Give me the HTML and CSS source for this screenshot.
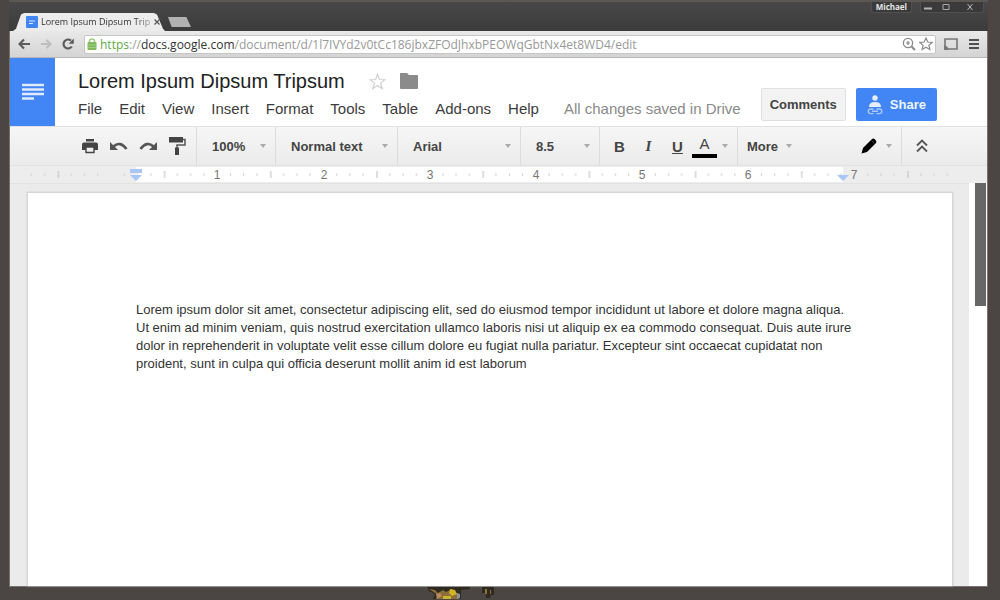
FILE: index.html
```html
<!DOCTYPE html>
<html lang="en">
<head>
<meta charset="utf-8">
<title>Lorem Ipsum Dipsum Tripsum</title>
<link rel="stylesheet" href="styles.css">
</head>
<body>
<div class="desktop">
  <div class="window">
    <div class="tabstrip">
      <div class="tab">
        <svg class="favicon" viewBox="0 0 12 12"><rect width="12" height="12" rx="1" fill="#4285f4"/><path d="M3 5h6M3 7.500h4" stroke="#dce8fd" stroke-width="1.200"/></svg>
        <span class="tab-title">Lorem Ipsum Dipsum Trip</span>
        <button class="tab-close" aria-label="Close tab"><svg viewBox="0 0 6 6"><path d="M.5.5l5 5M5.500.5l-5 5" stroke="#555" stroke-width="1.200"/></svg></button>
      </div>
      <button class="new-tab" aria-label="New tab"></button>
      <div class="window-controls">
        <button class="profile">Michael</button>
        <div class="controls">
          <button aria-label="Minimize"><svg viewBox="0 0 8 8"><path d="M0 5.500h8" stroke="#b5b5b5" stroke-width="2"/></svg></button>
          <button aria-label="Maximize"><svg viewBox="0 0 8 8"><path d="M1 1.500h6v5H1z" fill="none" stroke="#aaa"/></svg></button>
          <button aria-label="Close window"><svg viewBox="0 0 8 8"><path d="M1.500 1l5 6M6.500 1l-5 6" stroke="#bbb"/></svg></button>
        </div>
      </div>
    </div>

    <div class="navbar">
      <button class="nav-btn" aria-label="Back"><svg viewBox="0 0 12 12"><path d="M12 6H2M6 1.500L1.500 6 6 10.500" fill="none" stroke="#5c5c5c" stroke-width="2.200"/></svg></button>
      <button class="nav-btn" aria-label="Forward"><svg viewBox="0 0 12 12"><path d="M1 6h9M6.500 2l4 4-4 4" fill="none" stroke="#bdbdbd" stroke-width="2"/></svg></button>
      <button class="nav-btn" aria-label="Reload"><svg viewBox="0 0 12 12"><path d="M9.800 8.500A4.500 4.500 0 1 1 9 2.600" fill="none" stroke="#5c5c5c" stroke-width="2.200"/><path d="M11.800.5v5.200H6.600z" fill="#5c5c5c"/></svg></button>
      <div class="omnibox">
        <svg class="lock" viewBox="0 0 10 12"><path d="M2.500 5V3a2.500 2 0 0 1 5 0v2" fill="none" stroke="#9ccb82" stroke-width="1.500"/><rect x=".5" y="4" width="9" height="8" rx="1" fill="#7dbb5c"/><path d="M1 7h8M1 9.500h8" stroke="#a7d38f" stroke-width=".8"/></svg>
        <div class="url" role="textbox" aria-label="Address" contenteditable="true" spellcheck="false"><span class="url-secure">https</span>://<span class="url-host">docs.google.com</span>/document/d/1l7IVYd2v0tCc186jbxZFOdJhxbPEOWqGbtNx4et8WD4/edit</div>
        <button aria-label="Zoom"><svg class="omni-icon" viewBox="0 0 14 14"><circle cx="6" cy="6" r="4.600" fill="none" stroke="#888" stroke-width="1.300"/><path d="M9.500 9.500l3.500 3.500" stroke="#888" stroke-width="2"/><path d="M4 6h4M6 4v4" stroke="#888" stroke-width="1.200"/></svg></button>
        <button aria-label="Bookmark this page"><svg class="omni-icon" viewBox="0 0 14 14"><path d="M7 1l1.800 4 4.400.4-3.300 2.900 1 4.300L7 10.300l-3.900 2.300 1-4.300L.8 5.400 5.200 5z" fill="none" stroke="#8c8c8c" stroke-width="1.200"/></svg></button>
      </div>
      <button class="cast" aria-label="Cast"><svg viewBox="0 0 14 12"><path d="M1 10.500V1h12v10H1" fill="none" stroke="#777" stroke-width="1.600"/><path d="M0 7.500A4.500 4.500 0 0 1 4.500 12H0z" fill="#777"/></svg></button>
      <button class="chrome-menu" aria-label="Chrome menu"><svg viewBox="0 0 10 12"><path d="M0 2h10M0 6h10M0 10h10" stroke="#505050" stroke-width="2.200"/></svg></button>
    </div>

    <header class="doc-header">
      <a class="docs-home" href="#" aria-label="Docs home"><svg viewBox="0 0 24 20"><path d="M1 3h22M1 7.500h22M1 12h22M1 16.500h12" stroke="#dfeafd" stroke-width="2.300"/></svg></a>
      <div class="doc-info">
        <div class="title-row">
          <h1>Lorem Ipsum Dipsum Tripsum</h1>
          <button aria-label="Star"><svg class="star" viewBox="0 0 16 16"><path d="M8 1.200l1.800 4.900 5.200.2-4.100 3.200 1.500 5.100L8 11.700l-4.400 2.900 1.500-5.100L1 6.300l5.200-.2z" fill="none" stroke="#cfcfcf" stroke-width="1.100"/></svg></button>
          <button aria-label="Move to folder"><svg class="folder" viewBox="0 0 20 16"><path d="M1 0h7l2 2h8q1 0 1 1v12q0 1-1 1H2q-1 0-1-1z" fill="#8b8b8b"/></svg></button>
        </div>
        <nav class="menus">
          <button>File</button><button>Edit</button><button>View</button><button>Insert</button><button>Format</button><button>Tools</button><button>Table</button><button>Add-ons</button><button>Help</button>
          <span class="save-state">All changes saved in Drive</span>
        </nav>
      </div>
      <div class="doc-actions">
        <button class="comments">Comments</button>
        <button class="share"><svg viewBox="0 0 16 20"><circle cx="8" cy="3" r="2.700" fill="#e3edfe"/><path d="M2 12q0-5 6-5t6 5z" fill="#e3edfe"/><path d="M6.500 14H3.500a2.300 2.300 0 0 0 0 4.600h3M9.500 14h3a2.300 2.300 0 0 1 0 4.600h-3M5 16.300h6" fill="none" stroke="#a9c7fb" stroke-width="1.400"/></svg>Share</button>
      </div>
    </header>

    <div class="toolbar" role="toolbar" aria-label="Formatting">
      <div class="group history">
        <button aria-label="Print"><svg viewBox="0 0 18 18"><path d="M5 2h8v2.500H5z" fill="#444"/><path d="M3 5.500h12q2 0 2 2V13H1V7.500q0-2 2-2z" fill="#444"/><path d="M5 10h8v5.500H5z" fill="#f0f0f0" stroke="#444" stroke-width="1.400"/></svg></button>
        <button aria-label="Undo"><svg viewBox="0 0 18 18"><path d="M0 5v8h8z" fill="#555"/><path d="M3.500 9.500Q10 3.500 16.500 12" fill="none" stroke="#555" stroke-width="2.600"/></svg></button>
        <button aria-label="Redo"><svg viewBox="0 0 18 18"><path d="M18 5v8h-8z" fill="#555"/><path d="M14.500 9.500Q8 3.500 1.500 12" fill="none" stroke="#555" stroke-width="2.600"/></svg></button>
        <button aria-label="Paint format"><svg viewBox="0 0 18 18"><path d="M1 0h14v5.500H1z" fill="#444"/><path d="M15 2.500h2V8H9v3" fill="none" stroke="#555" stroke-width="1.500"/><path d="M7 10.500h4V18H7z" fill="#444"/></svg></button>
      </div>
      <div class="group pick zoom"><select aria-label="Zoom"><option>100%</option></select></div>
      <div class="group pick style"><select aria-label="Style"><option>Normal text</option></select></div>
      <div class="group pick font"><select aria-label="Font"><option>Arial</option></select></div>
      <div class="group pick size"><select aria-label="Font size"><option>8.5</option></select></div>
      <div class="group format">
        <button class="bold" aria-label="Bold">B</button>
        <button class="italic" aria-label="Italic">I</button>
        <button class="underline" aria-label="Underline">U</button>
        <button class="color arrow" aria-label="Text color"><span>A</span></button>
      </div>
      <div class="group more"><button class="arrow">More</button></div>
      <div class="group mode"><button class="arrow" aria-label="Editing mode"><svg viewBox="0 0 18 18"><path d="M1.500 16.500l1.500-5.500L12 2q1.500-1 3 .5l.5.5q1.500 1.500.5 3L7 15z" fill="#000"/><path d="M11.500 3.500l3 3" stroke="#555" stroke-width=".8"/></svg></button></div>
      <div class="group hide"><button aria-label="Hide the menus"><svg viewBox="0 0 12 14"><path d="M1 6.500l5-5 5 5M1 12.500l5-5 5 5" fill="none" stroke="#555" stroke-width="1.800"/></svg></button></div>
    </div>

    <div class="ruler">
      <svg width="977" height="17" viewBox="10 166 977 17">
        <defs>
          <pattern id="inch" x="111" y="166" width="106.200" height="17" patternUnits="userSpaceOnUse">
            <path d="M13.300 7v3M26.500 7v3M39.800 7v3M66.400 7v3M79.700 7v3M92.900 7v3" stroke="#d3d3d3"/>
            <path d="M53.600 5v7" stroke="#bdbdbd"/>
          </pattern>
        </defs>
        <path d="M136 167h707v15H136z" fill="#fff"/>
        <path d="M30 166h920v17H30z" fill="url(#inch)"/>
        <g class="ruler-numbers"><text x="217" y="179">1</text><text x="324" y="179">2</text><text x="430" y="179">3</text><text x="536" y="179">4</text><text x="642" y="179">5</text><text x="748" y="179">6</text><text x="854" y="179">7</text></g>
        <path d="M130 169h12v4h-12zM130 175h12l-6 6zM837 175h12l-6 6z" fill="#a9c6f5"/>
      </svg>
    </div>

    <div class="workspace">
      <div class="canvas">
        <main class="page">
          <p>Lorem ipsum dolor sit amet, consectetur adipiscing elit, sed do eiusmod tempor incididunt ut labore et dolore magna aliqua. Ut enim ad minim veniam, quis nostrud exercitation ullamco laboris nisi ut aliquip ex ea commodo consequat. Duis aute irure dolor in reprehenderit in voluptate velit esse cillum dolore eu fugiat nulla pariatur. Excepteur sint occaecat cupidatat non proident, sunt in culpa qui officia deserunt mollit anim id est laborum</p>
        </main>
      </div>
      <div class="scrollbar"><div class="thumb"></div></div>
    </div>
  </div>
  <div class="wallpaper">
    <svg width="70" height="12" viewBox="426 588 70 12">
      <path d="M427 588h43v2l-9 1v9h-28l2-5-6-3z" fill="#2e2a20"/>
      <path d="M429 590l6 1 3 3 5-3 3 2 6-3 2 3 4 2 1 5h-23l2-4z" fill="#8a6f38"/>
      <path d="M450 590l5 1 2 4-5 2-3-3zM443 597h8v3h-8z" fill="#d0b42a"/>
      <path d="M436 595l4-1 2 3-5 3z" fill="#b98a62"/>
      <path d="M457 594l3 1v4l-3 1z" fill="#8b929d"/>
      <path d="M482 588h12v8h-3l-1 3h-4v-5h-4z" fill="#2e2a22"/>
      <path d="M485 590h2v5h-2zM490 591h1v4h-1z" fill="#8a7531"/>
    </svg>
  </div>
</div>
</body>
</html>
```
FILE: styles.css
```css
* { box-sizing: border-box; }

body {
  margin: 0;
  font-family: "Liberation Sans", Arial, sans-serif;
  color: #333;
}

button {
  margin: 0;
  padding: 0;
  border: 0;
  background: none;
  color: inherit;
  font: inherit;
}

svg { display: block; }

h1, p { margin: 0; }

.desktop {
  display: flex;
  flex-direction: column;
  min-height: 100vh;
  padding: 0 12px 0 9px;
  background: #4b4543;
}

.window {
  display: flex;
  flex: 1;
  flex-direction: column;
  border: solid #777270;
  border-width: 0 1px 1px;
}

/* Tab strip */
.tabstrip {
  display: flex;
  align-items: flex-end;
  height: 31px;
  margin: 0 -1px;
  padding-left: 4px;
  border-top: 2px solid #5a5755;
  background: linear-gradient(#484848, #3b3b3b);
}

.tab {
  display: flex;
  align-items: center;
  width: 152px;
  height: 18px;
  padding: 0 8px 0 13px;
  background: #ececec;
  clip-path: polygon(0 100%, 3px 88%, 8px 8%, 11px 0, 141px 0, 144px 8%, 150px 88%, 100% 100%);
}

.favicon { flex: none; width: 12px; height: 12px; }

.tab-title {
  flex: 1;
  margin-left: 3px;
  font: 9px/14px "Open Sans", sans-serif;
  white-space: nowrap;
  mask-image: linear-gradient(90deg, #000 85%, #0006);
}

.tab-close { margin: 0 4px 0 4px; }
.tab-close svg { width: 6px; height: 6px; }

.new-tab {
  width: 23px;
  height: 10px;
  margin: 0 0 4px 3px;
  background: #b1b1b1;
  clip-path: polygon(0 0, 80% 0, 100% 100%, 16% 100%);
}

.window-controls {
  display: flex;
  align-self: flex-start;
  gap: 8px;
  margin-left: auto;
  padding-right: 4px;
}

.profile, .controls {
  height: 11px;
  border: 1px solid #505050;
  border-top: 0;
  border-radius: 0 0 3px 3px;
  background: #3a3a3a;
}

.profile {
  padding: 0 4px;
  color: #e6e6e6;
  font: bold 8px/10px "Open Sans", sans-serif;
}

.controls {
  display: grid;
  grid-template-columns: 14px 22px 26px;
  place-items: center;
}

.controls svg { width: 8px; height: 8px; }

/* Address bar */
.navbar {
  display: flex;
  align-items: center;
  height: 27px;
  padding: 0 8px 0 8px;
  border-bottom: 1px solid #b6b6b6;
  background: linear-gradient(#e9e9e9, #d4d4d4);
}

.nav-btn { width: 12px; margin-right: 10px; }
.nav-btn svg { width: 12px; height: 12px; }

.omnibox {
  display: flex;
  flex: 1;
  align-items: center;
  gap: 3px;
  height: 19px;
  padding: 0 2px;
  border: 1px solid #c6c6c6;
  border-radius: 2px;
  background: #fff;
}

.lock { width: 10px; height: 12px; }

.url {
  flex: 1;
  overflow: hidden;
  color: #999;
  font: 12px/17px "Open Sans", sans-serif;
  white-space: nowrap;
}

.url-secure { color: #60aa45; }
.url-host { color: #333; }
.omni-icon { width: 14px; height: 14px; }

.cast { margin: 0 11px 0 8px; }
.cast svg { width: 14px; height: 12px; }
.chrome-menu svg { width: 10px; height: 12px; }

/* Document header */
.doc-header {
  display: flex;
  min-height: 68px;
  background: #fff;
}

.docs-home {
  display: grid;
  place-items: center;
  width: 45px;
  background: #4285f4;
}

.docs-home svg { width: 24px; height: 20px; }

.doc-info { flex: 1; padding: 11px 0 0 23px; }

.title-row { display: flex; align-items: center; }

h1 {
  color: #222;
  font-size: 20px;
  font-weight: normal;
  line-height: 24px;
  white-space: nowrap;
}

.star { width: 17px; height: 17px; margin: 0 13px 0 24px; }
.folder { width: 20px; height: 16px; }

.menus {
  display: flex;
  gap: 17px;
  margin-top: 6px;
  color: #3c3c3c;
  font-size: 15px;
  line-height: 20px;
  white-space: nowrap;
}

.save-state { margin-left: 8px; color: #8a8a8a; }

.doc-actions {
  display: flex;
  align-items: flex-end;
  gap: 10px;
  padding: 0 50px 5px 0;
  font-size: 13px;
  font-weight: bold;
}

.comments, .share { height: 33px; border-radius: 2px; }

.comments {
  padding: 0 8px;
  border: 1px solid #e0e0e0;
  background: #f3f3f3;
  color: #444;
}

.share {
  display: flex;
  align-items: center;
  gap: 7px;
  padding: 0 11px;
  background: #4285f4;
  color: #eef4ff;
}

.share svg { width: 16px; height: 20px; }

/* Formatting toolbar */
.toolbar {
  display: flex;
  height: 40px;
  border: solid #e2e2e2;
  border-width: 1px 0;
  background: linear-gradient(#f6f6f6, #ebebeb);
  color: #444;
  font-size: 13px;
  font-weight: bold;
}

.group {
  display: flex;
  align-items: center;
  border-right: 1px solid #dcdcdc;
}

.history { padding: 0 5px 0 65px; }
.history button { display: grid; place-items: center; width: 29px; height: 30px; }
.history svg { width: 18px; height: 18px; }

.pick { position: relative; }

.pick select {
  width: 100%;
  height: 30px;
  padding: 0 0 0 15px;
  border: 0;
  background: none;
  color: inherit;
  font: inherit;
  appearance: none;
}

.pick::after, .arrow::after {
  border: solid transparent;
  border-width: 4px 3px 0;
  border-top-color: #aaa;
  content: "";
}

.pick::after { position: absolute; right: 9px; }

.zoom { width: 79px; }
.style { width: 122px; }
.font { width: 123px; }
.size { width: 79px; }

.arrow { display: flex; align-items: center; }

.format { padding: 0 5px; font-size: 15px; }
.format button { width: 29px; }
.italic { font-family: "Liberation Serif", serif; font-style: italic; }
.underline { text-decoration: underline; }
.format .color { width: 40px; gap: 5px; font-weight: normal; }

.color span {
  width: 25px;
  border-bottom: 4px solid #000;
  line-height: 20px;
}

.more { flex: 1; padding-left: 9px; border: 0; }
.more .arrow { gap: 8px; }
.mode { padding-right: 9px; }
.mode .arrow { gap: 8px; }
.mode svg { width: 18px; height: 18px; }
.hide { width: 85px; padding-left: 14px; border: 0; }
.hide svg { width: 12px; height: 14px; }

/* Ruler */
.ruler { overflow: hidden; background: #ededed; }

.ruler-numbers {
  fill: #777;
  font-size: 12px;
  text-anchor: middle;
}

/* Document area */
.workspace { display: flex; flex: 1; }

.canvas {
  display: flex;
  flex: 1;
  padding: 8px 16px 0 17px;
  border-top: 1px solid #e2e2e2;
  background: #ebebeb;
}

.page {
  flex: 1;
  padding: 108px 92px 0 108px;
  border: 1px solid #d6d6d6;
  border-bottom: 0;
  background: #fff;
  box-shadow: 0 0 2px #ccc;
  color: #333;
  font-size: 13px;
  line-height: 18px;
}

.scrollbar {
  width: 18px;
  padding: 0 1px 0 6px;
  background: #fff;
}

.thumb { height: 123px; background: #666; }

.wallpaper { height: 13px; padding-left: 417px; overflow: hidden; }
```
